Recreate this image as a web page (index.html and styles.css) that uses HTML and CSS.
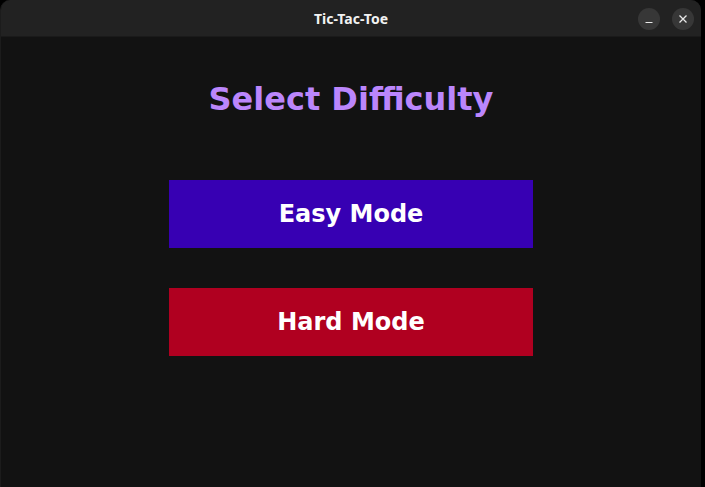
FILE: index.html
```html
<!DOCTYPE html>
<html>
<head>
<meta charset="utf-8">
<link rel="stylesheet" href="styles.css">
</head>
<body>
<div class="window">
  <div class="titlebar">
    <span class="title">Tic-Tac-Toe</span>
    <div class="controls">
      <span class="ctl"><svg width="22" height="22" viewBox="0 0 22 22"><line x1="7.5" y1="14.5" x2="14.5" y2="14.5" stroke="#e8e8e8" stroke-width="1.2"/></svg></span>
      <span class="ctl"><svg width="22" height="22" viewBox="0 0 22 22"><path d="M7.5 7.5 L14.5 14.5 M14.5 7.5 L7.5 14.5" stroke="#e8e8e8" stroke-width="1.3"/></svg></span>
    </div>
  </div>
  <div class="content">
    <h1 class="heading">Select Difficulty</h1>
    <div class="buttons">
      <button class="btn easy">Easy Mode</button>
      <button class="btn hard">Hard Mode</button>
    </div>
  </div>
</div>
</body>
</html>
```
FILE: styles.css
```css
html, body {
  margin: 0;
  padding: 0;
  background: #000000;
  width: 705px;
  height: 487px;
  overflow: hidden;
}
.window {
  width: 701px;
  height: 487px;
  box-sizing: border-box;
  display: flex;
  flex-direction: column;
  background: #121212;
  border-left: 1px solid #1c1c1c;
  border-radius: 10px 10px 0 0;
  overflow: hidden;
}
.titlebar {
  height: 37px;
  flex: none;
  background: #222222;
  border-bottom: 1px solid #1a1a1a;
  box-sizing: border-box;
  display: flex;
  align-items: center;
  justify-content: center;
  position: relative;
}
.title {
  font-family: "Noto Sans", "DejaVu Sans", sans-serif;
  font-weight: 700;
  font-size: 14px;
  color: #f2f2f2;
}
.controls {
  position: absolute;
  right: 7px;
  top: 8px;
  display: flex;
  gap: 12px;
}
.ctl {
  width: 22px;
  height: 22px;
  border-radius: 50%;
  background: #373737;
  display: flex;
}
.content {
  flex: 1;
  display: flex;
  flex-direction: column;
  align-items: center;
}
.heading {
  margin: 43px 0 0 0;
  font-family: "DejaVu Sans", sans-serif;
  font-weight: 700;
  font-size: 32px;
  line-height: 38px;
  color: #bb86fc;
}
.buttons {
  margin-top: 62px;
  display: flex;
  flex-direction: column;
  gap: 40px;
}
.btn {
  width: 364px;
  height: 68px;
  border: none;
  padding: 0;
  font-family: "DejaVu Sans", sans-serif;
  font-weight: 700;
  font-size: 24px;
  color: #ffffff;
}
.easy { background: #3700b3; }
.hard { background: #b00020; }
```
